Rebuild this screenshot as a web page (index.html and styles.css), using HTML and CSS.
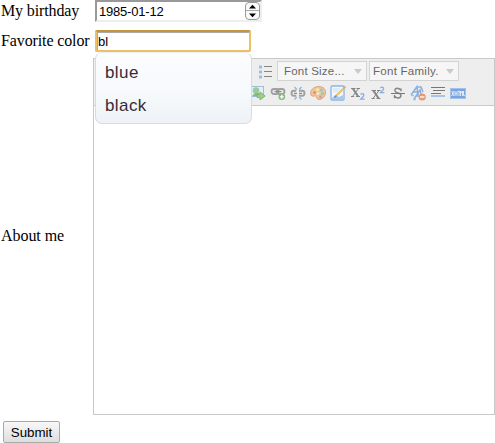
FILE: index.html
```html
<!DOCTYPE html>
<html lang="en">
<head>
<meta charset="utf-8">
<title>Profile</title>
<link rel="stylesheet" href="styles.css">
</head>
<body>
<form class="profile">
  <div class="row birthday-row">
    <span class="label">My birthday</span>
    <div class="field date-field"><span class="date">1985-01-12</span>
      <svg class="spinner" width="15" height="18" viewBox="0 0 15 18"><rect x=".5" y=".5" width="14" height="17" rx="3.5" fill="#fafafa" stroke="#999"/><path d="M1 8.500h13" stroke="#aaa"/><path d="M4 6.500h7L7.500 2.800zM4 11.500h7l-3.500 3.700z" fill="#000"/></svg>
    </div>
  </div>
  <div class="row color-row">
    <span class="label">Favorite color</span>
    <div class="combo">
      <div class="field color-field">bl</div>
      <ul class="menu"><li>blue</li><li>black</li></ul>
    </div>
  </div>
  <div class="row about-row">
    <span class="label">About me</span>
    <div class="editor">
      <div class="toolbar">
        <div class="tools top-tools">
          <svg class="list-icon" width="14" height="14" viewBox="0 0 14 14"><path d="M0 2h3M0 7h3M0 12h3" stroke="#9fbbe4" stroke-width="3"/><path d="M5 1.500h8M5 6.500h8M5 11.500h8" stroke="#858585"/></svg>
          <div class="select"><span>Font Size...</span><i class="arrow"></i></div>
          <div class="select"><span>Font Family.</span><i class="arrow"></i></div>
        </div>
        <div class="tools icons">
          <svg viewBox="0 0 16 16"><rect x=".5" y="1.500" width="13" height="10" fill="#e5eefb" stroke="#9dbce2"/><circle cx="6" cy="5.500" r="3.300" fill="#9fca98"/><path d="M2 11l3-3h4l3 3z" fill="#8aba86"/><path d="M7 9.500h3V7l5.200 4-5.200 4v-2.500H7z" fill="#9bd088" stroke="#74b070" stroke-width=".8"/></svg>
          <svg viewBox="0 0 16 16"><g fill="none" stroke="#a0a0a0" stroke-width="1.800"><rect x="1.500" y="4" width="7" height="5" rx="2.500"/><rect x="7" y="4" width="7.500" height="5" rx="2.500"/></g><path d="M4.500 6.500h7" stroke="#8d8d8d" stroke-width="1.300"/><circle cx="11.800" cy="11.800" r="3.300" fill="#87b977"/><path d="M9.800 11.800h4M11.800 9.800v4" stroke="#fff" stroke-width="1.300"/></svg>
          <svg viewBox="0 0 16 16"><g fill="none" stroke="#a0a0a0" stroke-width="1.900"><path d="M6.300 5.800H3.800Q1.500 5.800 1.500 8.300t2.300 2.500h2.500M9 5.800h3.200Q14.500 5.800 14.500 8.300t-2.300 2.500H9"/><path d="M4 8.300h3M9 8.300h3" stroke="#8d8d8d" stroke-width="1.300"/></g><path d="M4.500 2l2.300 2.500M11.500 2L9.200 4.500M4.500 14.500L6.800 12M11.500 14.500L9.200 12" stroke="#8fb6e5" stroke-width="1.300"/></svg>
          <svg viewBox="0 0 16 16"><path d="M1 10C-.5 5 4 1.500 9 1.500c4 0 7 2.700 6.500 6.500-.4 4-3.500 6.500-6.500 6.500-3 0-1.500-3-3.500-3.500-1.500-.4-3.500 1-4.500-1z" fill="#f0c59b" stroke="#daa57c"/><circle cx="4.500" cy="7.500" r="1.500" fill="#e78d77"/><circle cx="7.500" cy="4.500" r="1.500" fill="#f4e99b"/><circle cx="11.500" cy="5" r="1.500" fill="#94c4dc"/><circle cx="12.500" cy="8.500" r="1.500" fill="#9bca98"/><circle cx="10.500" cy="11.700" r="1.500" fill="#ce9bb8"/><circle cx="8" cy="8.500" r="1.200" fill="#eee"/></svg>
          <svg viewBox="0 0 16 16"><rect x="1" y="1" width="13" height="14" rx="1" fill="#f0f6fd" stroke="#8fb4e2" stroke-width="1.300"/><path d="M3 4h7M3 6h5" stroke="#cadef4"/><path d="M2 13l3-3 4 2 4-2v4H2z" fill="#a8c9ee"/><path d="M6.500 10.500L13 4" stroke="#e9c677" stroke-width="2.400"/><path d="M13 4l2.500-2.500" stroke="#c4b49c" stroke-width="2"/><path d="M4.500 12.500l2-2" stroke="#888" stroke-width="1.500"/></svg>
          <svg viewBox="0 0 16 16"><g fill="none"><path d="M2.800 3.500l5.400 8" stroke="#858585" stroke-width="2"/><path d="M8.500 3.500l-6 8M1 3.500h4.500M6.500 3.500H10M1 11.500h3.200M6 11.500h4" stroke="#858585"/><path d="M10.500 9.500q1.800-1.700 3.200 0 .6 1.300-1 2.500l-2 2.200h3.900" stroke="#84afe3" stroke-width="1.300"/></g></svg>
          <svg viewBox="0 0 16 16"><g fill="none"><path d="M3.300 5.500l5.400 8" stroke="#858585" stroke-width="2"/><path d="M9 5.500l-6 8M1.500 5.500H6M7 5.500h3.500M1.500 13.500h3.200M6.500 13.500h4" stroke="#858585"/><path d="M10.300 3q1.800-1.700 3.200 0 .6 1.300-1 2.500l-2 2.200h3.900" stroke="#84afe3" stroke-width="1.300"/></g></svg>
          <svg viewBox="0 0 16 16"><path d="M11 6.300V3.500M11 5Q9 3 6.500 3.300 4.500 4 5 6q.5 1.500 3 2 3 .7 3 2.700-.3 2.300-3 2.300-2 0-3.500-1.700M4.500 13.300V10" fill="none" stroke="#858585" stroke-width="1.400"/><path d="M1 8.500h14" stroke="#777"/></svg>
          <svg viewBox="0 0 16 16"><g fill="none" stroke-width="1.500"><path d="M1 10L7 1.500l1 8.500M3.500 7h4" stroke="#86aee0"/><path d="M4 14l6-9 2 8M6.500 11H11M8 2h3l2 5" stroke="#86aee0"/><path d="M1 10.500h3M3 14.500h3" stroke="#a4c1e8"/></g><circle cx="12.200" cy="12" r="3.600" fill="#e7986f"/><path d="M10 12h4.400" stroke="#fff" stroke-width="1.400"/></svg>
          <svg viewBox="0 0 16 16"><path d="M1 2.500h14M3 5.500h12" stroke="#777"/><path d="M1 8.500h10" stroke="#777"/><path d="M1 11h14" stroke="#a7c5e9" stroke-width="2"/></svg>
          <svg viewBox="0 0 16 16"><rect y="3" width="16" height="11" fill="#78a5df"/><path d="M.5 3.500h15v10H.5z" fill="none" stroke="#a2c2ec"/><path d="M1.700 6l2.200 5M3.900 6L1.700 11M5 6v5M5 8.500h2M7 6v5M7.800 6.400h2.400M9 6v5M10.500 11V6l1 2 1-2v5M13.500 6v4.600h1.500" fill="none" stroke="#f4f8ff" stroke-width=".8"/></svg>
        </div>
      </div>
      <div class="canvas"></div>
    </div>
  </div>
  <button class="submit" type="button">Submit</button>
</form>
</body>
</html>
```
FILE: styles.css
```css
* { box-sizing: border-box; }
body { margin: 0; background: #fff; color: #000; overflow: hidden; font: 16px "Liberation Serif", serif; }
.profile { width: 495px; height: 443px; }
.row { display: grid; grid-template-columns: 93px 402px; align-items: center; }
.label { padding-left: 1px; letter-spacing: -.12px; white-space: nowrap; }
.birthday-row { height: 30px; align-items: start; }
.birthday-row .label { padding-top: 2px; }
.color-row { height: 28px; align-items: start; }
.color-row .label { padding-top: 2px; }
.about-row .label { padding-bottom: 2px; letter-spacing: -.05px; }
.field { height: 22px; margin-left: 2px; border: 2px solid #eee; border-top-color: #999; border-left-color: #999; background: #fff; font: 13px/20px "Liberation Sans", sans-serif; }
.date-field { display: flex; justify-content: space-between; align-items: center; width: 167px; padding-left: 2px; letter-spacing: -.2px; }
.date { padding-top: 2px; }
.spinner { display: block; }
.combo { position: relative; }
.color-field { width: 156px; padding-left: 1px; border: 2px solid #eebf66; border-top-color: #c5953c; border-radius: 2px; box-shadow: inset 1px 1px #aaa; }
.menu { position: absolute; z-index: 2; left: 2px; top: 22px; width: 157px; height: 72px; margin: 0; padding: 3px 0; list-style: none; border: 1px solid #d8dcdf; border-top-color: #eceff1; border-radius: 7px; background: linear-gradient(#fbfcfe, #f7fafc 55%, #eef2f6); color: #362b36; font: 17px/33px "Liberation Sans", sans-serif; letter-spacing: .4px; }
.menu li { height: 33px; padding-left: 9px; }
.editor { height: 357px; border: 1px solid #c9c9c9; }
.toolbar { height: 47px; padding-top: 2px; background: #eee; border-bottom: 1px solid #c9c9c9; }
.tools { display: flex; }
.top-tools { height: 20px; padding-left: 165px; gap: 2px; }
.list-icon { margin: 4px 2px 0 0; }
.select { display: flex; align-items: center; justify-content: space-between; width: 90px; height: 20px; padding: 0 4px 0 6px; border: 1px solid #d3d3d3; background: #f6f6f6; color: #666; font: 11.500px "Liberation Sans", sans-serif; letter-spacing: .2px; white-space: nowrap; }
.select + .select { padding-left: 3px; letter-spacing: .27px; }
.arrow { border: 4px solid transparent; border-top: 5px solid #c9c9c9; border-bottom: 0; }
.icons { gap: 4px; padding: 4px 0 0 156px; }
.icons svg { width: 16px; height: 16px; flex: none; }
.submit { display: block; width: 57px; height: 22px; margin: 6px 0 0 3px; padding: 0; border: 1px solid #a9a9a9; border-radius: 2px; background: linear-gradient(#f8f8f8, #dedede); color: #000; font: 13.333px "Liberation Sans", sans-serif; }
```
